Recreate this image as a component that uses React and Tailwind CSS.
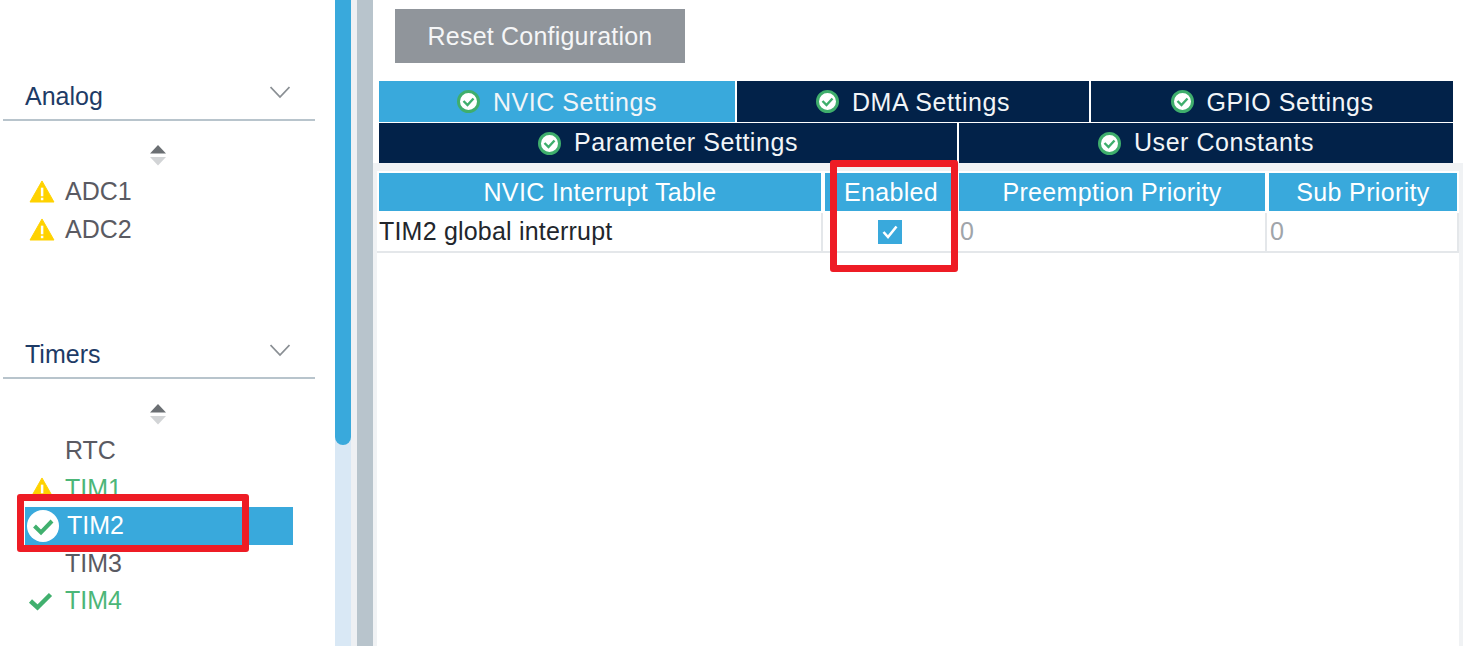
import React from 'react';

const FONT = 'font-["Liberation_Sans",Arial,sans-serif]';

const Warning = () => (
  <svg width="26" height="23" viewBox="0 0 26 24" className="ml-[4px]">
    <path d="M13 1 L25.5 23 L0.5 23 Z" fill="#ffd200" stroke="#ffd200" strokeLinejoin="round" />
    <rect x="11.8" y="8" width="2.6" height="9" fill="#fff" />
    <rect x="11.8" y="18.5" width="2.6" height="2.6" fill="#fff" />
  </svg>
);

const Check = () => (
  <svg width="25" height="20" viewBox="0 0 25 20" className="ml-[3px]">
    <path d="M2.5 10 L9.5 16.5 L22.5 3.5" fill="none" stroke="#41b06e" strokeWidth="4.5" />
  </svg>
);

const CircleCheck = () => (
  <svg width="32" height="32" viewBox="0 0 32 32" className="ml-[2px]">
    <circle cx="16" cy="16" r="16" fill="#fff" />
    <path d="M7.5 16 L14 22.5 L25 11" fill="none" stroke="#41b06e" strokeWidth="4" />
  </svg>
);

const TabIcon = () => (
  <svg width="23" height="23" viewBox="0 0 23 23" className="shrink-0">
    <circle cx="11.5" cy="11.5" r="10" fill="#fff" stroke="#3fae6c" strokeWidth="3" />
    <path d="M6.5 11 L10.5 15 L16.5 8.5" fill="none" stroke="#3fae6c" strokeWidth="2.4" />
  </svg>
);

const Chevron = () => (
  <svg width="20" height="13" viewBox="0 0 20 13">
    <path d="M0.5 1 L10 11 L19.5 1" fill="none" stroke="#8a8f94" strokeWidth="1.8" />
  </svg>
);

const SortArrows = () => (
  <svg width="18" height="21" viewBox="0 0 18 21" className="mx-auto">
    <path d="M9 0 L17 8.5 L1 8.5 Z" fill="#6b6f73" />
    <path d="M1 12 L17 12 L9 20.5 Z" fill="#d2d4d6" />
  </svg>
);

const GroupHeader = ({ title }) => (
  <div className="ml-[3px] w-[312px] h-[50px] border-b-2 border-[#b8c4cc] flex items-center justify-between pl-[22px] pr-[25px] pt-[4px]">
    <span className="text-[25px] text-[#1d3b66]">{title}</span>
    <span className="-mt-[10px] flex"><Chevron /></span>
  </div>
);

const Item = ({ label, icon, color = 'text-[#5a5a62]', active }) => (
  <div className={`flex items-center h-[37.5px] ml-[25px] w-[268px] ${active ? 'bg-[#39a9dc]' : ''}`}>
    <span className="w-[40px] flex justify-start shrink-0">{icon}</span>
    <span className={`text-[25px] ${active ? 'ml-[2px] text-white' : color}`}>{label}</span>
  </div>
);

const Tab = ({ label, active, className, labelClass = '' }) => (
  <div className={`flex items-center justify-center gap-[13px] text-[25px] tracking-[0.55px] text-[#f2f5f8] ${active ? 'bg-[#39a9dc]' : 'bg-[#022249]'} ${className}`}>
    <TabIcon />
    <span className={labelClass}>{label}</span>
  </div>
);

const HeadCell = ({ children, className }) => (
  <div className={`h-[38px] bg-[#39a9dc] text-white text-[25px] tracking-[0.35px] pt-[2px] flex items-center justify-center ${className}`}>
    {children}
  </div>
);

export default function App() {
  return (
    <div className={`relative flex w-[1463px] h-[646px] overflow-hidden bg-white ${FONT}`}>
      {/* left panel */}
      <div className="w-[335px] shrink-0 pt-[71px]">
        <GroupHeader title="Analog" />
        <div className="mt-[24px] w-[315px]"><SortArrows /></div>
        <div className="mt-[7px]">
          <Item label="ADC1" icon={<Warning />} />
          <Item label="ADC2" icon={<Warning />} />
        </div>
        <div className="mt-[81px]">
          <GroupHeader title="Timers" />
        </div>
        <div className="mt-[25px] w-[315px]"><SortArrows /></div>
        <div className="mt-[7px]">
          <Item label="RTC" />
          <Item label="TIM1" icon={<Warning />} color="text-[#4cb678]" />
          <Item label="TIM2" icon={<CircleCheck />} active />
          <Item label="TIM3" />
          <Item label="TIM4" icon={<Check />} color="text-[#4cb678]" />
        </div>
      </div>

      {/* scrollbar + splitter */}
      <div className="w-4 shrink-0 flex flex-col bg-[#d9e8f5]">
        <div className="h-[445px] bg-[#39a9dc] rounded-b-lg" />
      </div>
      <div className="w-[6px] shrink-0 bg-[#eef0f3]" />
      <div className="w-4 shrink-0 bg-[#b8c4cc]" />

      {/* right panel */}
      <div className="flex-1 min-w-0 flex flex-col">
        <div className="h-[81px] pt-[9px] pl-[22px]">
          <div className="w-[290px] h-[54px] pt-[2px] bg-[#90959b] text-[#f5f6f7] text-[25px] tracking-[0.2px] flex items-center justify-center">
            Reset Configuration
          </div>
        </div>
        <div className="pl-[6px] pr-[10px] flex flex-col gap-[1px]">
          <div className="flex h-[41px] gap-[2px]">
            <Tab label="NVIC Settings" active className="w-[356px]" labelClass="pt-[2px]" />
            <Tab label="DMA Settings" className="w-[352px]" labelClass="pt-[2px]" />
            <Tab label="GPIO Settings" className="flex-1" labelClass="pt-[2px]" />
          </div>
          <div className="flex h-[40px] gap-[2px]">
            <Tab label="Parameter Settings" className="w-[578px]" />
            <Tab label="User Constants" className="flex-1" />
          </div>
        </div>

        {/* table sits in a light grey frame */}
        <div className="flex-1 bg-[#f0f2f4] pt-[8px] px-[4px]">
          <div className="h-full bg-white pt-[2px]">
            <div className="flex px-[2px]">
              <HeadCell className="w-[442px] mr-[4px]">NVIC Interrupt Table</HeadCell>
              <HeadCell className="w-[132px] mr-[2px]">Enabled</HeadCell>
              <HeadCell className="w-[306px] mr-[4px]">Preemption Priority</HeadCell>
              <HeadCell className="flex-1">Sub Priority</HeadCell>
            </div>
            <div className="flex h-[40px] mt-[2px] border-b-2 border-[#e4e7ea] text-[25px]">
              <div className="w-[446px] border-r-2 border-[#e4e7ea] flex items-center pl-[2px] text-[#22262c] tracking-[0.2px]">TIM2 global interrupt</div>
              <div className="w-[135px] flex items-center justify-center pr-[2px]">
                <div className="w-[24px] h-[24px] bg-[#39a9dc] flex items-center justify-center">
                  <svg width="18" height="16" viewBox="0 0 18 16">
                    <path d="M2.5 8 L7 13 L15.5 2.5" fill="none" stroke="#fff" strokeWidth="2.6" />
                  </svg>
                </div>
              </div>
              <div className="w-[309px] border-r-2 border-[#e4e7ea] flex items-center pl-[2px] text-[#a0a5aa]">0</div>
              <div className="flex-1 border-r-2 border-[#e4e7ea] flex items-center pl-[3px] text-[#a0a5aa]">0</div>
            </div>
          </div>
        </div>
      </div>

      {/* red annotation frames */}
      <div className="absolute left-[17px] top-[494px] w-[232px] h-[58px] border-[7px] border-[#ee1c25] rounded-[3px]" />
      <div className="absolute left-[830px] top-[160px] w-[128px] h-[112px] border-[7px] border-[#ee1c25] rounded-[3px]" />
    </div>
  );
}
